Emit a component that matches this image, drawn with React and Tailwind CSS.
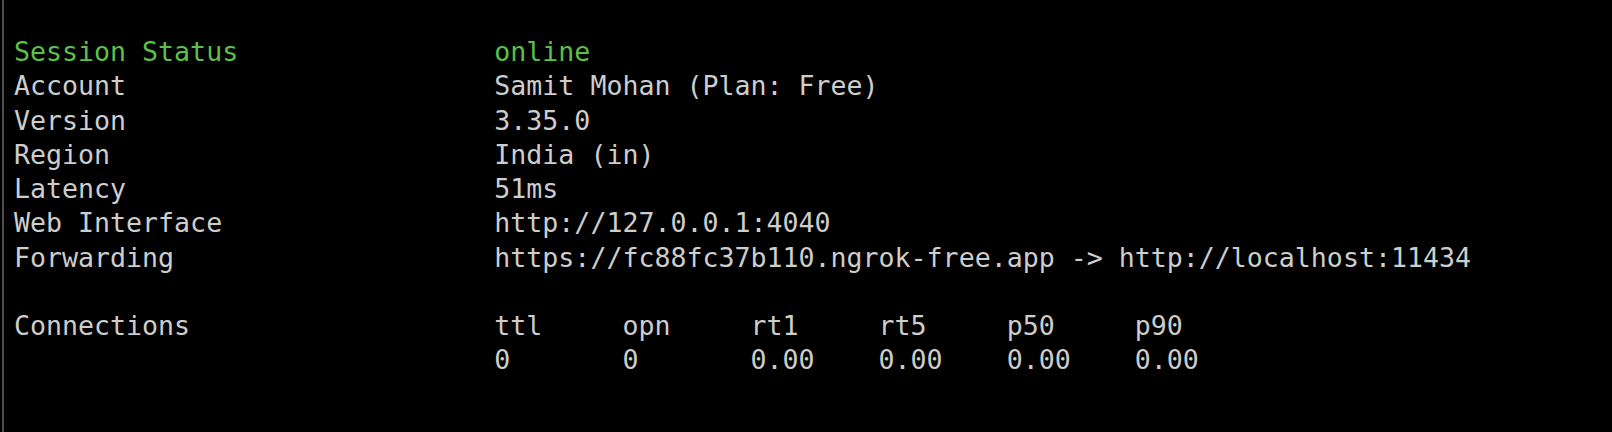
const rows = [
  ["Account", "Samit Mohan (Plan: Free)"],
  ["Version", "3.35.0"],
  ["Region", "India (in)"],
  ["Latency", "51ms"],
  ["Web Interface", "http://127.0.0.1:4040"],
  ["Forwarding", "https://fc88fc37b110.ngrok-free.app -> http://localhost:11434"],
];

const stats = [
  ["ttl", "0"],
  ["opn", "0"],
  ["rt1", "0.00"],
  ["rt5", "0.00"],
  ["p50", "0.00"],
  ["p90", "0.00"],
];

function Line({ label, children, className = "" }) {
  return (
    <div className={`flex h-[34.25px] items-center whitespace-pre ${className}`}>
      <span className="w-[30ch] shrink-0">{label}</span>
      {children}
    </div>
  );
}

export default function App() {
  return (
    <div className="h-[432px] w-full overflow-hidden bg-black pl-[2px]">
      <div
        className="h-full border-l-2 border-[#4d4d4d] pl-[10px] pt-[35px] text-[26.6px] leading-[34px] text-[#cdcdcd]"
        style={{ fontFamily: '"DejaVu Sans Mono", monospace' }}
      >
        <Line label="Session Status" className="text-[#5cc046]">
          <span>online</span>
        </Line>
        {rows.map(([label, value]) => (
          <Line key={label} label={label}>
            <span>{value}</span>
          </Line>
        ))}
        <div className="h-[34.25px]" />
        <Line label="Connections">
          {stats.map(([k]) => (
            <span key={k} className="w-[8ch] shrink-0">{k}</span>
          ))}
        </Line>
        <Line label="">
          {stats.map(([k, v]) => (
            <span key={k} className="w-[8ch] shrink-0">{v}</span>
          ))}
        </Line>
      </div>
    </div>
  );
}
